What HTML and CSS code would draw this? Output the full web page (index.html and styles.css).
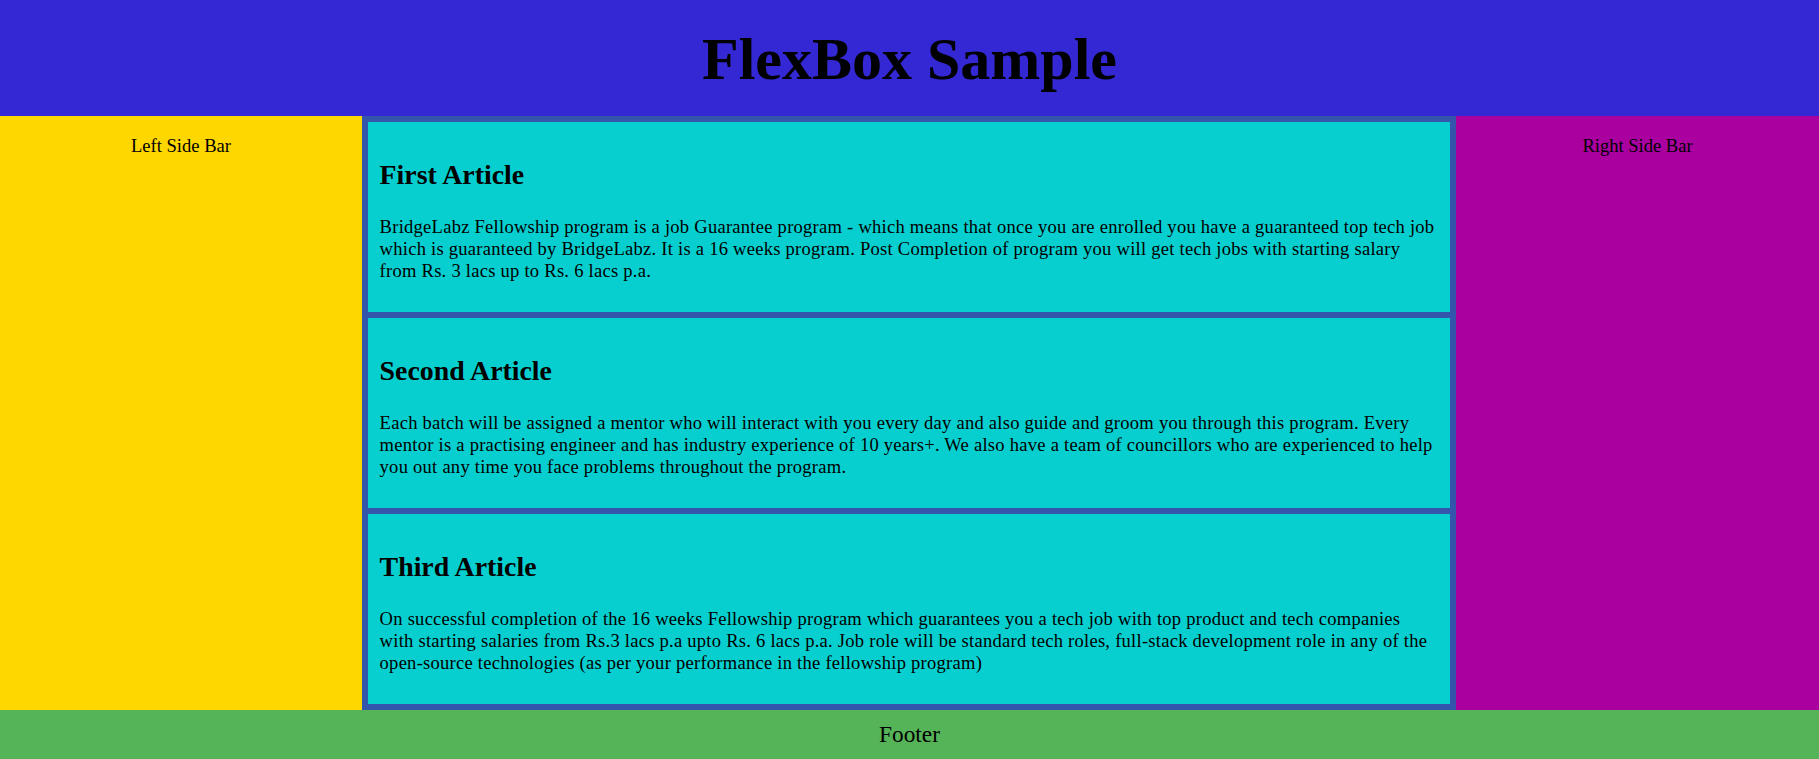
FILE: index.html
```html
<!DOCTYPE html>
<html>
<head>
<meta charset="utf-8">
<title>FlexBox Sample</title>
<link rel="stylesheet" href="styles.css">
</head>
<body>
<div class="page">
  <header class="header"><h1 class="title">FlexBox Sample</h1></header>
  <div class="middle">
    <aside class="side left"><p class="side-text">Left Side Bar</p></aside>
    <main class="main">
      <article class="article">
        <h2 class="art-title">First Article</h2>
        <p class="art-text">BridgeLabz Fellowship program is a job Guarantee program - which means that once you are enrolled you have a guaranteed top tech job<br>which is guaranteed by BridgeLabz. It is a 16 weeks program. Post Completion of program you will get tech jobs with starting salary<br>from Rs. 3 lacs up to Rs. 6 lacs p.a.</p>
      </article>
      <article class="article">
        <h2 class="art-title">Second Article</h2>
        <p class="art-text">Each batch will be assigned a mentor who will interact with you every day and also guide and groom you through this program. Every<br>mentor is a practising engineer and has industry experience of 10 years+. We also have a team of councillors who are experienced to help<br>you out any time you face problems throughout the program.</p>
      </article>
      <article class="article">
        <h2 class="art-title">Third Article</h2>
        <p class="art-text">On successful completion of the 16 weeks Fellowship program which guarantees you a tech job with top product and tech companies<br>with starting salaries from Rs.3 lacs p.a upto Rs. 6 lacs p.a. Job role will be standard tech roles, full-stack development role in any of the<br>open-source technologies (as per your performance in the fellowship program)</p>
      </article>
    </main>
    <aside class="side right"><p class="side-text">Right Side Bar</p></aside>
  </div>
  <footer class="footer">Footer</footer>
</div>
</body>
</html>
```

FILE: styles.css
```css
html, body {
  margin: 0;
  padding: 0;
}
body {
  font-family: "Liberation Serif", "Times New Roman", serif;
  font-size: 18.56px;
  color: #000;
}
.page {
  display: flex;
  flex-direction: column;
  height: 759px;
}
.header {
  height: 116px;
  background: #3328d4;
  display: flex;
  align-items: center;
  justify-content: center;
}
.title {
  margin: 0;
  font-size: 60px;
  font-weight: bold;
  line-height: 1;
  padding-top: 2px;
}
.middle {
  flex: 1;
  display: grid;
  grid-template-columns: 362px 1fr 363px;
}
.side {
  text-align: center;
}
.left { background: #ffd700; }
.right { background: #aa00a0; }
.side-text {
  margin: 18.5px 0;
}
.main {
  background: #3355ab;
  padding: 6px;
  display: flex;
  flex-direction: column;
  gap: 6px;
}
.article {
  flex: 1;
  background: #08cfcf;
  padding: 12px 11.6px;
}
.art-title {
  margin: 25px 0 25px;
  font-size: 27.84px;
}
.art-text {
  margin: 0;
  letter-spacing: 0.25px;
}
.footer {
  height: 49px;
  background: #56b458;
  display: flex;
  align-items: center;
  justify-content: center;
  font-size: 23.3px;
}
```
